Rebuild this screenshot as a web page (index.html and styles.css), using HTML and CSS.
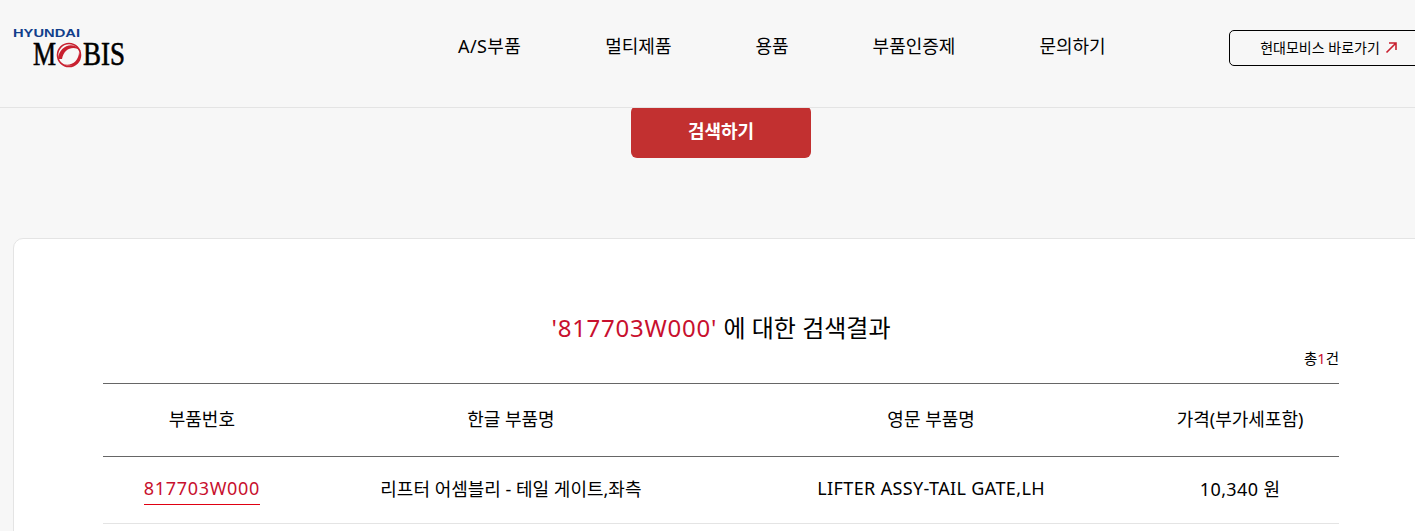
FILE: index.html
```html
<!DOCTYPE html>
<html lang="ko">
<head>
    <meta charset="UTF-8">
    <title>부품 검색결과</title>
    <link rel="stylesheet" href="styles.css">
</head>
<body>
    <div class="page">
        <header class="header">
            <a class="logo" href="#">
                <svg width="122" height="46" viewBox="0 0 122 46">
                    <text class="logo-top" x="0" y="9" textLength="67" lengthAdjust="spacingAndGlyphs">HYUNDAI</text>
                    <text class="logo-name" x="20" y="37" textLength="23" lengthAdjust="spacingAndGlyphs">M</text>
                    <circle class="logo-ring" cx="56" cy="27" r="11.5"></circle>
                    <path class="logo-swirl" d="M45 31 C46 18 60 12 68 23 C61 17 51 20 49 31 Z"></path>
                    <path class="logo-swirl" d="M50 36 C58 39 66 33 66 24 C70 32 63 42 50 36 Z"></path>
                    <text class="logo-name" x="70" y="37" textLength="42" lengthAdjust="spacingAndGlyphs">BIS</text>
                </svg>
            </a>
            <nav class="nav">
                <a href="#">A/S부품</a>
                <a href="#">멀티제품</a>
                <a href="#">용품</a>
                <a href="#">부품인증제</a>
                <a href="#">문의하기</a>
            </nav>
            <a class="mobis-link" href="#">현대모비스 바로가기
                <svg width="13" height="13" viewBox="0 0 13 13">
                    <path d="M1.5 11.5 L11 2 M4 2 H11 V9"></path>
                </svg>
            </a>
        </header>
        <main class="main">
            <button class="search-btn">검색하기</button>
            <section class="card">
                <h2 class="result-title"><span class="red wide">'817703W000'</span> 에 대한 검색결과</h2>
                <p class="total">총<span class="red">1</span>건</p>
                <table class="result-table">
                    <thead>
                        <tr>
                            <th>부품번호</th>
                            <th>한글 부품명</th>
                            <th>영문 부품명</th>
                            <th>가격(부가세포함)</th>
                        </tr>
                    </thead>
                    <tbody>
                        <tr>
                            <td><a class="part-no" href="#">817703W000</a></td>
                            <td>리프터 어셈블리 - 테일 게이트,좌측</td>
                            <td class="eng-name">LIFTER ASSY-TAIL GATE,LH</td>
                            <td class="price">10,340 원</td>
                        </tr>
                    </tbody>
                </table>
            </section>
        </main>
    </div>
</body>
</html>
```
FILE: styles.css
```css
html, body {
    margin: 0;
    height: 100%;
    overflow: hidden;
}

body {
    font-family: "Noto Sans", "Noto Sans CJK KR", sans-serif;
    color: #000;
    background: #f7f7f7;
}

a {
    color: inherit;
    text-decoration: none;
}

.page {
    width: 1442px;
}

.header {
    position: relative;
    z-index: 2;
    display: flex;
    align-items: center;
    height: 107px;
    padding: 0 13px;
    background: #f7f7f7;
    border-bottom: 1px solid #e4e4e4;
}

.logo {
    display: block;
    height: 46px;
    margin-top: -6px;
}

.logo svg {
    display: block;
}

.logo-top {
    font-family: "Liberation Sans", sans-serif;
    font-size: 11px;
    font-weight: 700;
    fill: #123f8b;
}

.logo-name {
    font-family: "Liberation Serif", serif;
    font-size: 33px;
    fill: #000;
    stroke: #000;
    stroke-width: 0.6;
}

.logo-ring {
    fill: none;
    stroke: #c8202f;
    stroke-width: 1.6;
}

.logo-swirl {
    fill: #c8202f;
}

.nav {
    display: flex;
    gap: 84px;
    margin-left: 323px;
    margin-top: -17px;
    font-size: 18px;
}

.nav a:first-child {
    letter-spacing: 0.4px;
}

.mobis-link {
    display: flex;
    align-items: center;
    justify-content: center;
    gap: 5px;
    width: 198px;
    height: 32px;
    margin-left: auto;
    margin-top: -11px;
    padding-bottom: 2px;
    font-size: 14px;
    border: 1px solid #000;
    border-radius: 5px;
}

.mobis-link svg {
    fill: none;
    stroke: #c8202f;
    stroke-width: 1.6;
}

.main {
    padding: 0 13px;
}

.search-btn {
    display: block;
    width: 180px;
    height: 52px;
    margin: -2px auto 0;
    padding: 0 0 4px;
    font-family: inherit;
    font-size: 18px;
    font-weight: 700;
    color: #fff;
    background: #c23030;
    border: none;
    border-radius: 6px;
}

.card {
    height: 400px;
    margin-top: 80px;
    padding: 69px 89px 0;
    background: #fff;
    border: 1px solid #e4e4e4;
    border-radius: 10px;
}

.result-title {
    margin: 0;
    font-size: 24px;
    font-weight: 400;
    line-height: 40px;
    text-align: center;
}

.red {
    color: #c8102e;
}

.wide {
    letter-spacing: 0.75px;
}

.total {
    margin: 0;
    font-size: 14.5px;
    line-height: 20px;
    text-align: right;
}

.result-table {
    width: 100%;
    margin-top: 15px;
    border-collapse: collapse;
    table-layout: fixed;
    border-top: 1px solid #666;
    font-size: 18px;
}

.result-table th {
    width: 16%;
    height: 68px;
    padding: 0 0 4px;
    font-weight: 400;
    border-bottom: 1px solid #666;
}

.result-table th:nth-child(2),
.result-table th:nth-child(3) {
    width: 34%;
}

.result-table td {
    height: 62px;
    padding: 0 0 4px;
    text-align: center;
    border-bottom: 1px solid #e4e4e4;
}

.eng-name {
    letter-spacing: 0.37px;
}

.price {
    letter-spacing: 0.4px;
}

.part-no {
    padding-bottom: 4px;
    letter-spacing: 0.7px;
    color: #c8102e;
    border-bottom: 1px solid #e00012;
}
```
